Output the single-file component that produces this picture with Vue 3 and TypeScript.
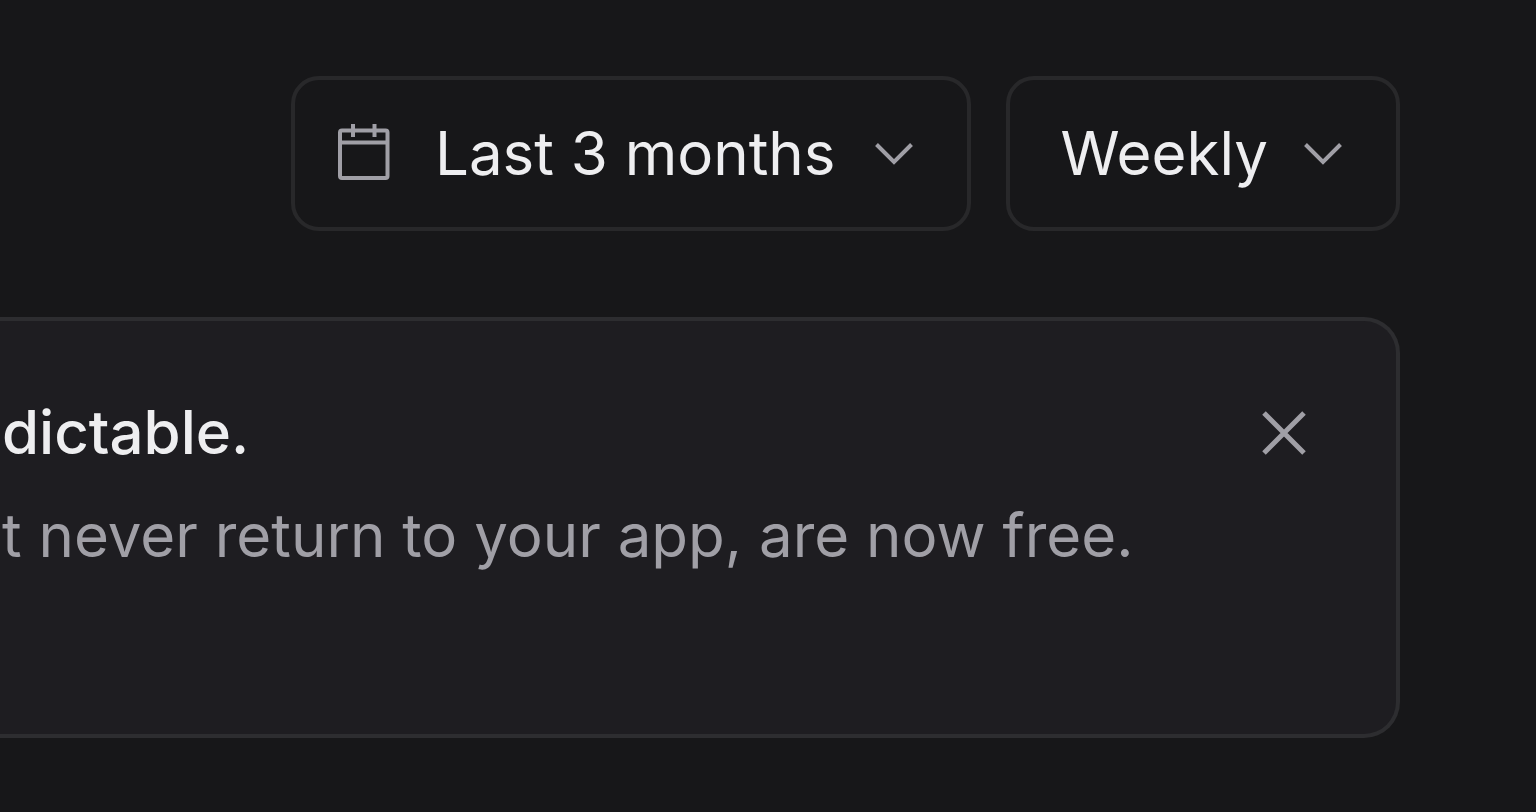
<script setup lang="ts">
import { ref } from 'vue'

const ranges: string[] = ['Last 3 months', 'Last 6 months', 'Last year']
const intervals: string[] = ['Daily', 'Weekly', 'Monthly']

const range = ref('Last 3 months')
const interval = ref('Weekly')
const bannerOpen = ref(true)
</script>

<template>
  <main class="page">
    <div class="filters">
      <div class="picker picker-range">
        <select v-model="range" class="field" aria-label="Date range">
          <option v-for="item in ranges" :key="item" :value="item">{{ item }}</option>
        </select>
        <svg class="calendar" width="52" height="56" viewBox="0 0 52 56" aria-hidden="true">
          <rect x="2" y="6.5" width="47.5" height="47.5" rx="2" />
          <path d="M2 18.5H49.5M15 0V13M36.5 0V13" />
        </svg>
        <svg class="chevron" width="38" height="22" viewBox="0 0 38 22" aria-hidden="true">
          <path d="M1.5 1.5L19 19L36.5 1.5" />
        </svg>
      </div>
      <div class="picker">
        <select v-model="interval" class="field" aria-label="Interval">
          <option v-for="item in intervals" :key="item" :value="item">{{ item }}</option>
        </select>
        <svg class="chevron" width="38" height="22" viewBox="0 0 38 22" aria-hidden="true">
          <path d="M1.5 1.5L19 19L36.5 1.5" />
        </svg>
      </div>
    </div>

    <section v-if="bannerOpen" class="banner">
      <div class="copy">
        <h2 class="title">dictable.</h2>
        <p class="text">t never return to your app, are now free.</p>
      </div>
      <button class="close" type="button" aria-label="Dismiss" @click="bannerOpen = false">
        <svg width="44" height="44" viewBox="0 0 44 44" aria-hidden="true">
          <path d="M2 2L42 42M42 2L2 42" />
        </svg>
      </button>
    </section>
  </main>
</template>

<style>
body {
  margin: 0;
  background: #171719;
}
</style>

<style scoped>
.page {
  box-sizing: border-box;
  min-height: 100vh;
  padding: 76px 136px 72px 0;
  overflow: hidden;
  background: #171719;
  color: #eeeef0;
  font-family: Inter, "Liberation Sans", sans-serif;
  font-size: 60px;
  line-height: 103px;
}

.filters {
  display: flex;
  justify-content: flex-end;
  gap: 35px;
  margin-bottom: 86px;
}

.picker {
  display: grid;
  align-items: center;
}

.picker > * {
  grid-area: 1 / 1;
}

.field {
  appearance: none;
  field-sizing: content;
  box-sizing: border-box;
  height: 155px;
  margin: 0;
  padding: 0 128px 0 50px;
  border: 4px solid #28282a;
  border-radius: 28px;
  background: transparent;
  color: inherit;
  font: inherit;
  cursor: pointer;
}

.picker-range .field {
  padding-right: 132px;
  padding-left: 140px;
}

svg {
  display: block;
  fill: none;
  stroke: #a09fa6;
  stroke-width: 4;
}

.calendar,
.chevron {
  pointer-events: none;
}

.calendar {
  justify-self: start;
  margin: 0 0 4px 47px;
}

.chevron {
  justify-self: end;
  margin-right: 58px;
}

.banner {
  display: flex;
  align-items: flex-start;
  justify-content: space-between;
  padding: 60px 74px 147px 2px;
  border: 4px solid #2d2d30;
  border-left: 0;
  border-radius: 0 36px 36px 0;
  background: #1e1d21;
}

.title,
.text {
  margin: 0;
  font-size: inherit;
  white-space: nowrap;
}

.title {
  font-weight: 500;
}

.text {
  color: #a09fa6;
}

.close {
  padding: 16px;
  margin-top: 14px;
  border: 0;
  background: transparent;
  cursor: pointer;
}

.close svg {
  stroke-width: 5;
}
</style>
